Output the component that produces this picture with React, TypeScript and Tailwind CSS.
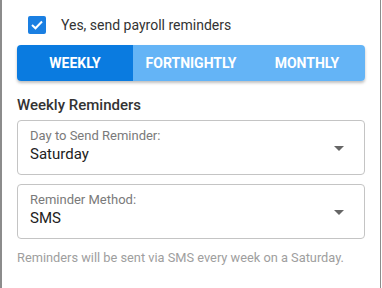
import { useState } from "react";

const options = ["Weekly", "Fortnightly", "Monthly"];

function SelectBox({ label, value }: { label: string; value: string }) {
  return (
    <div className="flex items-center h-[55px] border border-[#c4c4c4] rounded-[4px] pl-3 pr-5">
      <div className="flex-1 flex flex-col self-start pt-[7px]">
        <span className="text-[13px] leading-[16px] text-[#7a7a7a]">{label}</span>
        <span className="text-[15px] leading-[20px] text-[#222]">{value}</span>
      </div>
      <svg width="10" height="5" viewBox="0 0 10 5" className="mt-[1px]">
        <path d="M0 0 L10 0 L5 5 Z" fill="#666" />
      </svg>
    </div>
  );
}

function App() {
  const [freq, setFreq] = useState("Weekly");

  return (
    <div
      className="w-[382px] h-[288px] bg-white"
      style={{ fontFamily: "Roboto, 'Liberation Sans', sans-serif" }}
    >
      <div className="h-full w-[381px] border-l-2 border-r border-[#8c8c8c] pl-[15px] pr-[15px]">
        <label className="flex items-center gap-[15px] pl-[11px] pt-[16px] h-[34px]">
          <span className="w-[18px] h-[18px] rounded-[2px] bg-[#1a7fe2] flex items-center justify-center">
            <svg width="12" height="10" viewBox="0 0 12 10">
              <path d="M1 5 L4.5 8.3 L11 1.5" stroke="#fff" strokeWidth="2" fill="none" />
            </svg>
          </span>
          <span className="text-[14px] text-[#333]">Yes, send payroll reminders</span>
        </label>

        <div className="mt-[11px] flex h-[36px] rounded-[4px] overflow-hidden shadow-[0_2px_3px_rgba(0,0,0,0.25)]">
          {options.map((o) => (
            <button
              key={o}
              onClick={() => setFreq(o)}
              className={
                "flex-1 text-white font-bold text-[14px] uppercase " +
                (freq === o ? "bg-[#0a7be0]" : "bg-[#64b4f6]")
              }
            >
              {o}
            </button>
          ))}
        </div>

        <h3 className="mt-[14px] text-[15px] leading-[20px] font-medium text-[#333]">Weekly Reminders</h3>

        <div className="mt-[5px] flex flex-col gap-[9px]">
          <SelectBox label="Day to Send Reminder:" value="Saturday" />
          <SelectBox label="Reminder Method:" value="SMS" />
        </div>

        <p className="mt-[11px] text-[12.8px] leading-[16px] text-[#9e9e9e]">
          Reminders will be sent via SMS every week on a Saturday.
        </p>
      </div>
    </div>
  );
}

export default App;
